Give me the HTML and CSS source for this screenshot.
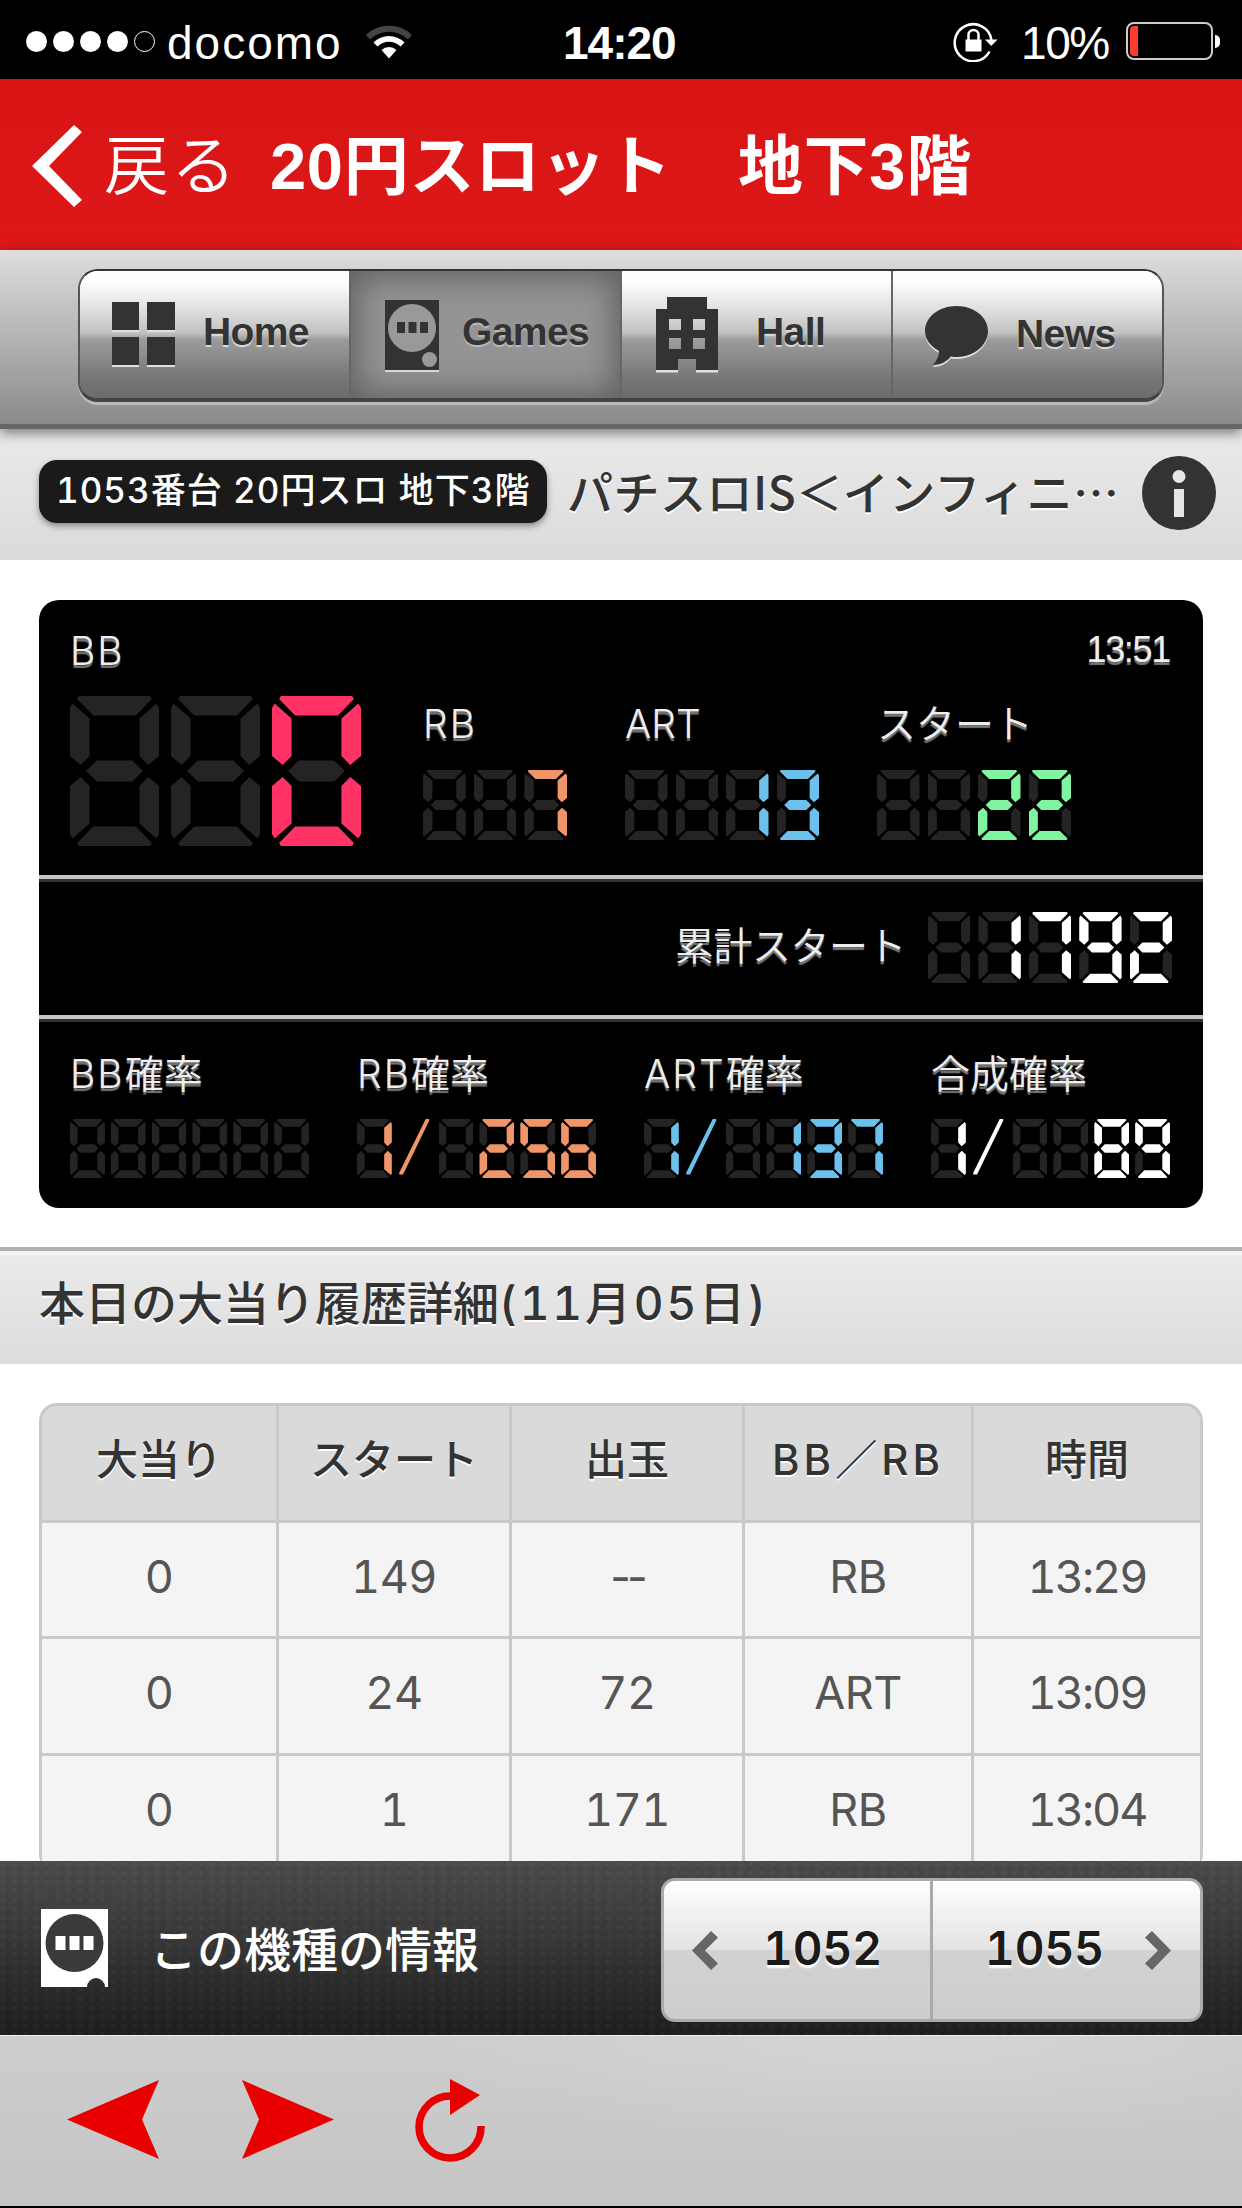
FILE: index.html
```html
<!DOCTYPE html>
<html lang="ja">
<head>
    <meta charset="UTF-8">
    <meta name="viewport" content="width=device-width, initial-scale=1.0">
    <title>20円スロット 地下3階</title>
    <link rel="stylesheet" href="styles.css">
</head>
<body>
    <div class="status-bar">
        <div class="signal"><i></i><i></i><i></i><i></i><i class="empty"></i></div>
        <span class="carrier">docomo</span>
        <svg class="wifi" width="48" height="36" viewBox="0 0 48 36">
            <path d="M1 12A33 33 0 0 1 47 12L43 16.500A27 27 0 0 0 5 16.500Z" fill="#444"/>
            <path d="M8.500 19.500A22 22 0 0 1 39.500 19.500L35.500 23.500A16.500 16.500 0 0 0 12.500 23.500Z" fill="#fff"/>
            <path d="M16.500 27A11 11 0 0 1 31.500 27L24 35.500Z" fill="#fff"/>
        </svg>
        <span class="clock">14:20</span>
        <svg class="rotation-lock" width="46" height="42" viewBox="0 0 46 42">
            <path d="M36.500 31.500A18.500 18.500 0 1 1 38.500 20" fill="none" stroke="#fff" stroke-width="2.500"/>
            <path d="M32 19.500H44.500L38.200 26Z" fill="#fff"/>
            <rect x="12.500" y="19.500" width="16" height="12" fill="#fff"/>
            <path d="M15.500 20V15a5 5 0 0 1 10 0V20" fill="none" stroke="#fff" stroke-width="2.500"/>
        </svg>
        <span class="percent">10%</span>
        <div class="battery"><i></i></div>
    </div>

    <header class="title-bar">
        <svg width="50" height="82" viewBox="0 0 50 82">
            <path d="M42 0L50 7L17 41L50 75L42 82L0 41Z" fill="#fff"/>
        </svg>
        <span class="back">戻る</span>
        <h1>20円スロット　地下3階</h1>
    </header>

    <nav class="nav-bar">
        <div class="tabs">
            <div class="tab">
                <svg class="ico-home" width="63" height="65" viewBox="0 0 63 65">
                    <path d="M0 2H27V30H0ZM35 2H63V30H35ZM0 37H27V65H0ZM35 37H63V65H35Z" fill="#e0e0e0"/>
                    <path d="M0 0H27V28H0ZM35 0H63V28H35ZM0 35H27V63H0ZM35 35H63V63H35Z" fill="#333"/>
                </svg>
                <span>Home</span>
            </div>
            <div class="tab active">
                <svg class="ico-games" width="54" height="72" viewBox="0 0 54 72">
                    <rect y="2" width="54" height="70" fill="#d8d8d8"/>
                    <rect width="54" height="70" fill="#333"/>
                    <circle cx="27" cy="28" r="24" fill="#999"/>
                    <path d="M12 22h8v11h-8zM23.500 22h8v11h-8zM35 22h8v11h-8z" fill="#333"/>
                    <circle cx="44.500" cy="59.500" r="7.500" fill="#999"/>
                </svg>
                <span>Games</span>
            </div>
            <div class="tab">
                <svg class="ico-hall" width="62" height="76" viewBox="0 0 62 76">
                    <path d="M0 73H22V75.500H0ZM40 73H62V75.500H40Z" fill="#e0e0e0"/>
                    <path fill-rule="evenodd" fill="#333" d="M11 0H51V12H62V73H40V62H22V73H0V12H11ZM13 22V33H25V22ZM37 22V33H49V22ZM13 41V52H25V41ZM37 41V52H49V41Z"/>
                </svg>
                <span>Hall</span>
            </div>
            <div class="tab">
                <svg class="ico-news" width="63" height="62" viewBox="0 0 63 62">
                    <path d="M31.500 2C49 2 63 13 63 27S49 53 31.500 53Q29 53 26 52.500Q19 61 8 61Q14 54 14 47Q0 39 0 27C0 13 14 2 31.500 2Z" fill="#ddd"/>
                    <path d="M31.500 0C49 0 63 11 63 25S49 51 31.500 51Q29 51 26 50.500Q19 59 8 59Q14 52 14 45Q0 37 0 25C0 11 14 0 31.500 0Z" fill="#333"/>
                </svg>
                <span>News</span>
            </div>
        </div>
    </nav>

    <div class="machine">
        <span class="badge">1053番台 20円スロ 地下3階</span>
        <span class="name">パチスロIS＜インフィニ…</span>
        <svg width="74" height="74" viewBox="0 0 74 74">
            <circle cx="37" cy="37" r="37" fill="#333"/>
            <circle cx="37" cy="20.500" r="6.500" fill="#e6e6e6"/>
            <rect x="32" y="33" width="10" height="28" fill="#e6e6e6"/>
        </svg>
    </div>

    <main>
        <section class="data-panel">
            <div class="counts">
                <div class="count big">
                    <label class="latin">BB</label>
                    <div class="led pink" data-value="  0"></div>
                </div>
                <div class="count rb">
                    <label class="latin">RB</label>
                    <div class="led orange" data-value="  7"></div>
                </div>
                <div class="count art">
                    <label>ART</label>
                    <div class="led blue" data-value="  13"></div>
                </div>
                <div class="count start">
                    <label>スタート</label>
                    <div class="led green" data-value="  22"></div>
                </div>
                <span class="time">13:51</span>
            </div>
            <div class="total">
                <label>累計スタート</label>
                <div class="led white" data-value=" 1792"></div>
            </div>
            <div class="rates">
                <div class="rate">
                    <label><span class="latin">BB</span>確率</label>
                    <div class="led white" data-value="      "></div>
                </div>
                <div class="rate">
                    <label><span class="latin">RB</span>確率</label>
                    <div class="led orange" data-value="1/ 256"></div>
                </div>
                <div class="rate">
                    <label><span class="latin">ART</span>確率</label>
                    <div class="led blue" data-value="1/ 137"></div>
                </div>
                <div class="rate">
                    <label>合成確率</label>
                    <div class="led white" data-value="1/  89"></div>
                </div>
            </div>
        </section>

        <h2>本日の大当り履歴詳細<span>(11月05日)</span></h2>

        <table>
            <thead>
                <tr><th class="c1">大当り</th><th class="c2">スタート</th><th class="c2">出玉</th><th class="kind">BB／RB</th><th>時間</th></tr>
            </thead>
            <tbody>
                <tr><td>0</td><td>149</td><td class="none">--</td><td>RB</td><td>13:29</td></tr>
                <tr><td>0</td><td>24</td><td>72</td><td>ART</td><td>13:09</td></tr>
                <tr><td>0</td><td>1</td><td>171</td><td>RB</td><td>13:04</td></tr>
            </tbody>
        </table>
    </main>

    <div class="machine-bar">
        <svg width="67" height="78" viewBox="0 0 67 78">
            <path d="M0 0H67V78H64A9 9 0 1 0 46 78H0Z" fill="#fff"/>
            <circle cx="33.500" cy="34" r="29" fill="#3a3a3a"/>
            <path d="M14.500 27h10v14h-10zM28.500 27h10v14h-10zM42.500 27h10v14h-10z" fill="#fff"/>
        </svg>
        <span class="label">この機種の情報</span>
        <div class="pager">
            <div class="prev">
                <svg width="26" height="39" viewBox="0 0 26 39"><path d="M19 0L26 6.500L13 19.500L26 32.500L19 39L0 19.500Z" fill="#666"/></svg>
                <span>1052</span>
            </div>
            <div class="next">
                <span>1055</span>
                <svg width="26" height="39" viewBox="0 0 26 39"><path d="M7 0L0 6.500L13 19.500L0 32.500L7 39L26 19.500Z" fill="#666"/></svg>
            </div>
        </div>
    </div>

    <footer class="toolbar">
        <svg width="92" height="79" viewBox="0 0 92 79"><path d="M92 0L75 39.500L92 79L0 39.500Z" fill="#e80000"/></svg>
        <svg width="92" height="79" viewBox="0 0 92 79"><path d="M0 0L17 39.500L0 79L92 39.500Z" fill="#e80000"/></svg>
        <svg class="reload" width="70" height="84" viewBox="0 0 70 84">
            <path d="M36 17A31 31 0 1 0 66 47" fill="none" stroke="#e80000" stroke-width="7.500"/>
            <path d="M35 0L65 16L35 36Z" fill="#e80000"/>
        </svg>
    </footer>

    <script>
        // segments: a top, b upper right, c lower right, d bottom, e lower left, f upper left, g middle
        const SEGMENTS = {
            ' ': '', 0: 'abcdef', 1: 'bc', 2: 'abged', 3: 'abgcd', 4: 'fgbc',
            5: 'afgcd', 6: 'afgedc', 7: 'abc', 8: 'abcdefg', 9: 'abcdfg'
        };

        document.querySelectorAll('.led').forEach(function (led) {
            led.dataset.value.split('').forEach(function (ch) {
                const digit = document.createElement('span');
                if (ch === '/') {
                    digit.className = 'slash';
                } else {
                    digit.className = 'digit';
                    'abcdefg'.split('').forEach(function (s) {
                        const seg = document.createElement('i');
                        seg.className = 'seg ' + s + (SEGMENTS[ch].includes(s) ? ' on' : '');
                        digit.appendChild(seg);
                    });
                }
                led.appendChild(digit);
            });
        });
    </script>
</body>
</html>
```
FILE: styles.css
```css
* {
    box-sizing: border-box;
}

body {
    margin: 0;
    width: 1242px;
    height: 2208px;
    overflow: hidden;
    display: flex;
    flex-direction: column;
    background: #fff;
    border-bottom: 2px solid #000;
    font-family: Inter, "Noto Sans CJK JP", sans-serif;
    font-variant-numeric: tabular-nums;
    color: #333;
}

svg {
    display: block;
    flex: none;
}

h1, h2 {
    margin: 0;
    white-space: nowrap;
}

/* status bar */
.status-bar {
    height: 79px;
    flex: none;
    background: #000;
    color: #fff;
    display: flex;
    align-items: center;
    padding: 3px 22px 0 26px;
    font: 46px/76px "Liberation Sans", sans-serif;
}

.status-bar span {
    padding-top: 3px;
}

.signal {
    display: flex;
    gap: 6px;
}

.signal i {
    width: 21px;
    height: 21px;
    border-radius: 50%;
    background: #fff;
}

.signal .empty {
    background: none;
    border: 1.5px solid #fff;
}

.carrier {
    width: 175px;
    margin-left: 12px;
    letter-spacing: 2px;
}

.wifi {
    margin-left: 23px;
}

.clock {
    width: 116px;
    margin-left: 150px;
    font-weight: bold;
    letter-spacing: -1px;
}

.rotation-lock {
    margin-left: 274px;
}

.percent {
    width: 90px;
    margin-left: 22px;
    letter-spacing: -1.4px;
}

.battery {
    width: 87px;
    height: 38px;
    margin-left: 15px;
    padding: 2px;
    border: 2px solid #ccc;
    border-radius: 8px;
    position: relative;
}

.battery i {
    display: block;
    width: 8px;
    height: 30px;
    border-radius: 4px 0 0 4px;
    background: #ff3b30;
}

.battery::after {
    content: "";
    position: absolute;
    right: -9px;
    top: 11px;
    width: 5px;
    height: 13px;
    border-radius: 0 5px 5px 0;
    background: #fff;
}

/* red title bar */
.title-bar {
    height: 171px;
    flex: none;
    display: flex;
    align-items: center;
    padding: 2px 0 0 32px;
    background: linear-gradient(#d81414, #de1819);
    color: #fff;
    font-family: "Liberation Sans", "Noto Sans CJK JP", sans-serif;
    font-size: 65px;
}

.back {
    width: 132px;
    margin: 0 0 9px 22px;
    font-weight: 350;
    letter-spacing: 2px;
    white-space: nowrap;
}

.title-bar h1 {
    margin: 0 0 9px 34px;
    font-size: 65px;
    letter-spacing: 0.7px;
}

/* tabs */
.nav-bar {
    height: 179px;
    flex: none;
    padding: 19px 78px 0;
    background: linear-gradient(#dedede, #8a8a8a);
    border-bottom: 5px solid #666;
    box-shadow: 0 4px 12px rgba(0, 0, 0, 0.5);
    position: relative;
}

.tabs {
    height: 133px;
    display: flex;
    border: 2px solid #555;
    border-top-color: #333;
    border-bottom: 4px solid #444;
    border-radius: 20px;
    overflow: hidden;
    box-shadow: 0 3px 1px #bbb;
}

.tab {
    flex: 1;
    display: flex;
    align-items: flex-start;
    background: linear-gradient(#fff 0%, #fcfcfc 10%, #ddd 32%, #c0c0c0 49%, #9c9c9c 54%, #767676 85%, #6c6c6c 100%);
    font: bold 39px/44px "Liberation Sans", sans-serif;
    text-shadow: 0 2px 1px #ddd;
}

.tab + .tab {
    border-left: 2px solid #666;
}

.tab.active {
    background: #949494;
    box-shadow: inset 0 0 32px 6px #606060;
    text-shadow: 0 2px 1px #bbb;
}

.tab span {
    margin-top: 39px;
    letter-spacing: -0.6px;
}

.ico-home {
    margin: 31px 28px 0 32px;
}

.ico-games {
    margin: 29px 23px 0 34px;
}

.ico-hall {
    margin: 26px 38px 0 34px;
}

.ico-news {
    margin: 35px 28px 0 32px;
}

.ico-news + span {
    margin-top: 41px;
}

/* machine name */
.machine {
    height: 131px;
    flex: none;
    display: flex;
    align-items: center;
    padding: 0 25px 3px 39px;
    background: linear-gradient(#ebebeb, #dadadc);
}

.badge {
    width: 508px;
    height: 63px;
    flex: none;
    margin-bottom: 3px;
    padding-left: 17px;
    border-radius: 18px;
    background: #1a1a1a;
    box-shadow: 0 3px 6px rgba(0, 0, 0, 0.4);
    color: #fff;
    font-size: 35px;
    font-weight: 500;
    line-height: 60px;
    letter-spacing: 1px;
    white-space: nowrap;
}

.name {
    width: 575px;
    margin: 0 0 6px 20px;
    font-family: "Noto Sans CJK JP", sans-serif;
    font-size: 46px;
    font-weight: 500;
    line-height: 60px;
    letter-spacing: 0.5px;
    white-space: nowrap;
    text-shadow: 0 2px #fff;
}

/* main content */
main {
    flex: 1;
    min-height: 0;
    overflow: hidden;
    padding-top: 40px;
}

.data-panel {
    height: 608px;
    margin: 0 39px;
    border-radius: 20px;
    background: #000;
    color: #eee;
    overflow: hidden;
}

.data-panel label {
    display: block;
    height: 50px;
    font-size: 39px;
    font-weight: 350;
    line-height: 46px;
    white-space: nowrap;
    text-shadow: 0 3px 1px #777;
}

.data-panel .latin {
    letter-spacing: 2px;
}

.counts {
    height: 279px;
    display: flex;
    padding-left: 31px;
    border-bottom: 4px solid #c8c5c8;
}

.count {
    width: 194px;
    margin-right: 58px;
    padding-top: 100px;
    flex: none;
}

.count.rb {
    width: 144px;
}

.count label {
    line-height: 47px;
}

.count .led {
    height: 70px;
    margin-top: 20px;
}

.count.big {
    width: 291px;
    margin-right: 62px;
    padding-top: 27px;
}

.count.big .led {
    height: 150px;
    margin-top: 19px;
    gap: 12px;
}

.count.start {
    margin-right: 0;
}

.time {
    margin: 25px 33px 0 auto;
    font-family: "Liberation Sans", sans-serif;
    font-size: 36px;
    line-height: 50px;
    letter-spacing: -1.3px;
    text-shadow: 0 3px 1px #777;
}

.total {
    height: 140px;
    display: flex;
    justify-content: flex-end;
    padding: 30px 31px 0 0;
    border-top: 3px solid #333;
    border-bottom: 4px solid #c8c5c8;
}

.total label {
    margin: 11px 22px 0 0;
    letter-spacing: -0.5px;
}

.total .led {
    width: 244px;
    height: 71px;
}

.rates {
    height: 189px;
    display: grid;
    grid-template-columns: repeat(4, 239px);
    column-gap: 48px;
    padding: 29px 0 0 31px;
    border-top: 3px solid #333;
}

.rate .led {
    height: 59px;
    margin-top: 18px;
    gap: 6px;
}

/* seven segment digits */
.led {
    display: flex;
    gap: 8px;
    color: #fff;
}

.led.pink { color: #ff3366; }
.led.orange { color: #f0956a; }
.led.blue { color: #6cc0ec; }
.led.green { color: #80f5a0; }

.digit {
    flex: 1;
    display: grid;
}

.seg {
    grid-area: 1 / 1;
    background: #242424;
}

.seg.on {
    background: currentColor;
}

.seg.a { clip-path: polygon(10% 0, 90% 0, 92% 2%, 74% 13%, 26% 13%, 8% 2%); }
.seg.b { clip-path: polygon(97% 5%, 78% 15%, 78% 40%, 88% 46%, 100% 40%, 100% 8%); }
.seg.c { clip-path: polygon(97% 95%, 78% 85%, 78% 60%, 88% 54%, 100% 60%, 100% 92%); }
.seg.d { clip-path: polygon(10% 100%, 90% 100%, 92% 98%, 74% 87%, 26% 87%, 8% 98%); }
.seg.e { clip-path: polygon(3% 95%, 22% 85%, 22% 60%, 12% 54%, 0 60%, 0 92%); }
.seg.f { clip-path: polygon(3% 5%, 22% 15%, 22% 40%, 12% 46%, 0 40%, 0 8%); }
.seg.g { clip-path: polygon(30% 43%, 70% 43%, 82% 50%, 70% 57%, 30% 57%, 18% 50%); }

.slash {
    flex: 1;
    background: currentColor;
    clip-path: polygon(80% 0, 90% 0, 90% 3%, 15% 94%, 4% 94%, 4% 91%);
}

/* history */
h2 {
    height: 117px;
    margin-top: 39px;
    padding-left: 39px;
    border-top: 4px solid #b0b0b0;
    background: linear-gradient(#f4f4f4 0, #f4f4f4 3px, #eaeaea 6px, #dcdcdc);
    font-size: 46px;
    font-weight: 500;
    line-height: 104px;
    text-shadow: 0 2px #fff;
}

h2 span {
    letter-spacing: 2.8px;
}

table {
    width: 1164px;
    margin: 39px 39px 0;
    table-layout: fixed;
    border-spacing: 3px;
    border-radius: 18px;
    background: #c9c9c9;
    overflow: hidden;
}

th, td {
    height: 113.500px;
    padding: 0 0 5px;
    text-align: center;
    white-space: nowrap;
    line-height: 60px;
}

th {
    width: 226px;
    background: #dadada;
    font-size: 42px;
    font-weight: 500;
    text-shadow: 0 2px #fff;
}

th.c1 {
    width: 234px;
}

th.c2 {
    width: 230px;
}

th.kind {
    letter-spacing: 4px;
}

th:first-child {
    border-top-left-radius: 15px;
}

th:last-child {
    border-top-right-radius: 15px;
}

td {
    background: #f4f4f4;
    color: #555;
    font-size: 45px;
    font-weight: 400;
    letter-spacing: -0.5px;
}

td:last-child {
    letter-spacing: -2px;
}

td.none {
    font-variant-numeric: normal;
    letter-spacing: -4px;
}

/* machine info bar */
.machine-bar {
    height: 174px;
    flex: none;
    display: flex;
    align-items: center;
    padding: 0 39px 0 41px;
    background:
        radial-gradient(circle at 3px 3px, rgba(255, 255, 255, 0.03) 1px, transparent 4px) 0 0 / 11px 9px,
        radial-gradient(circle at 3px 3px, rgba(0, 0, 0, 0.05) 1px, transparent 4px) 5px 4px / 13px 11px,
        linear-gradient(#4b4b4b, #1e1e1e);
    color: #fff;
}

.machine-bar .label {
    margin: 0 auto 3px 42px;
    font-size: 47px;
    font-weight: 500;
}

.pager {
    width: 542px;
    height: 144px;
    display: flex;
    margin-top: 4px;
    border: 3px solid #aaa;
    border-radius: 14px;
    background: linear-gradient(#fff, #e2e2e2 50%, #d2d2d2 50%, #cdcdcd);
}

.pager div {
    display: flex;
    flex: 1;
    align-items: center;
    color: #1a1a1a;
    font-size: 46px;
    font-weight: 600;
    text-shadow: 0 3px 2px #fff;
}

.pager .prev {
    gap: 45px;
    padding-left: 28px;
    border-right: 3px solid #aaa;
}

.pager .next {
    justify-content: flex-end;
    gap: 41px;
    padding-right: 29px;
}

.pager span {
    margin-top: -5px;
}

/* browser toolbar */
.toolbar {
    height: 171px;
    flex: none;
    display: flex;
    align-items: flex-start;
    padding: 44px 67px 0;
    border-top: 1px solid #eee;
    background:
        radial-gradient(ellipse 500px 110px at 900px 0, rgba(255, 255, 255, 0.16), transparent),
        linear-gradient(#cdcdcd, #c5c5c5);
}

.toolbar svg + svg {
    margin-left: 83px;
}

.toolbar svg.reload {
    margin-left: 81px;
    margin-top: -1px;
}
```
